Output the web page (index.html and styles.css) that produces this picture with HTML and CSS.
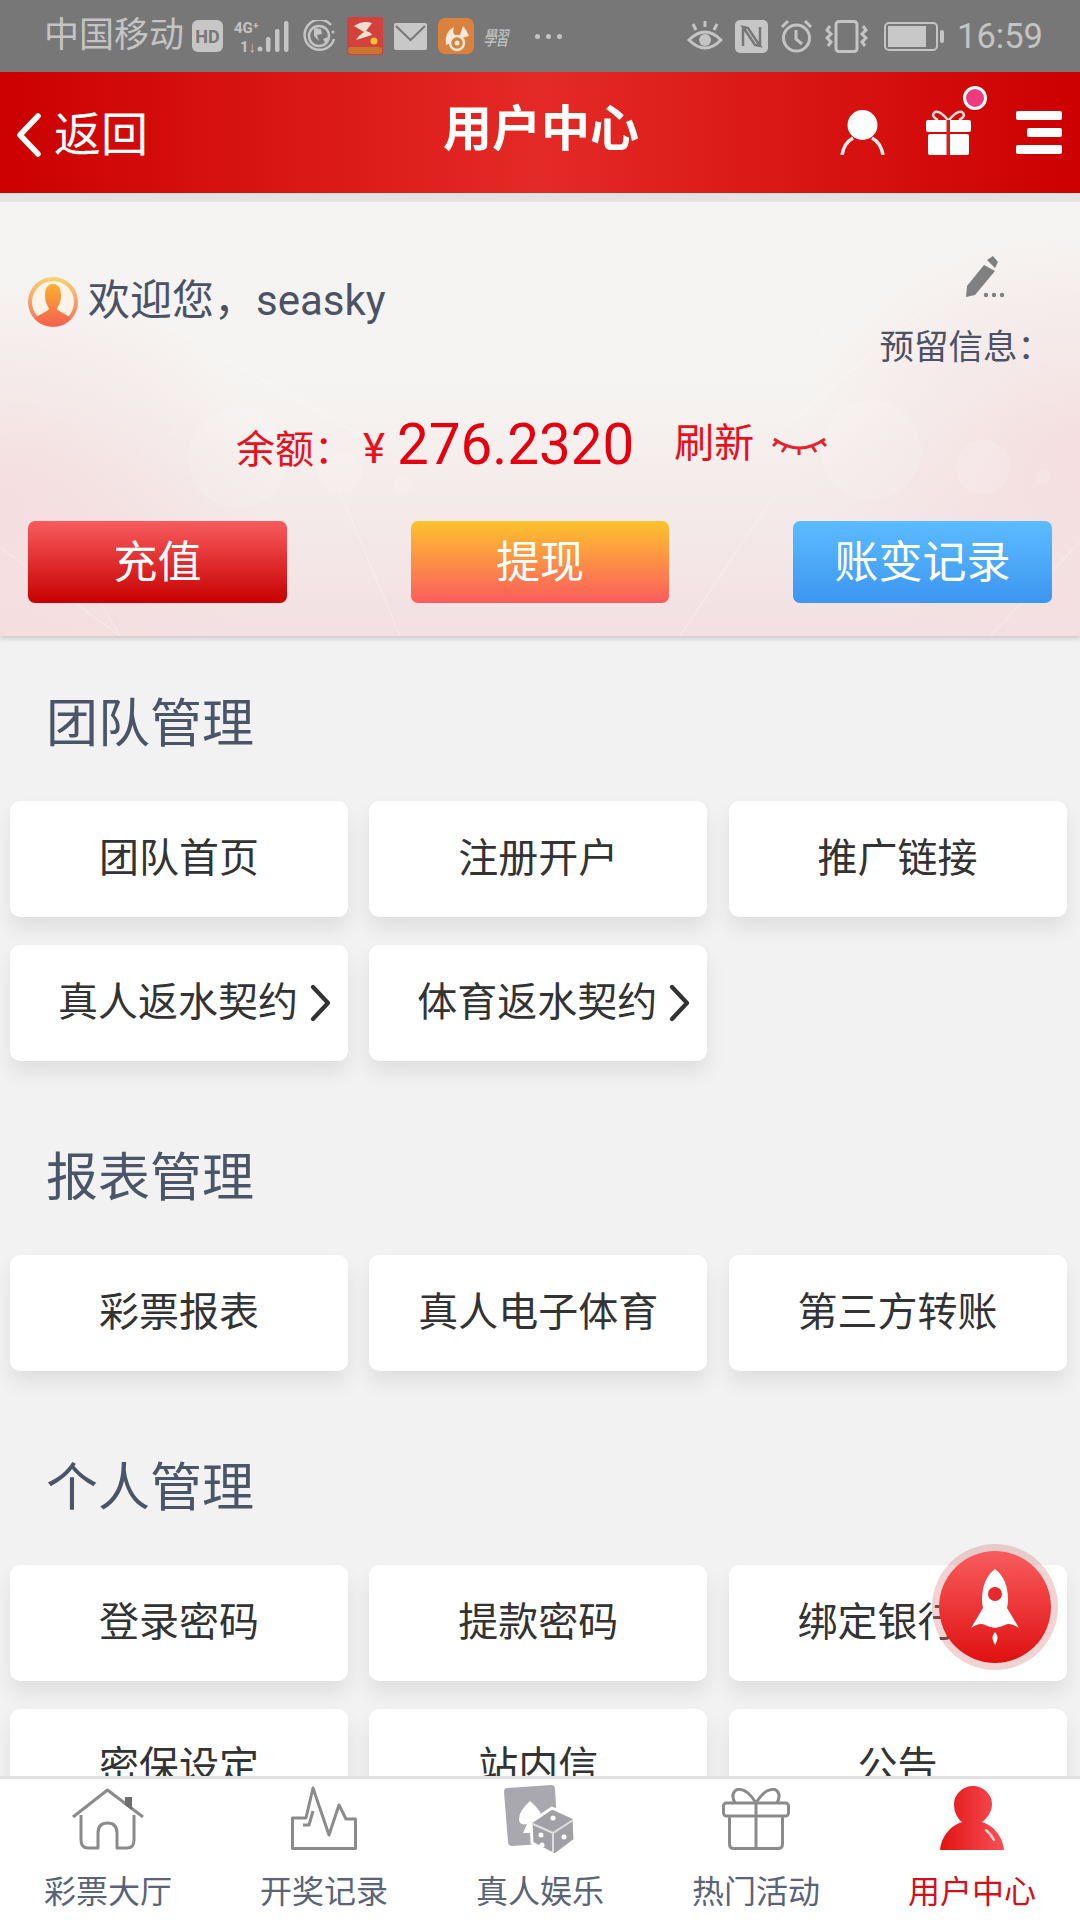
FILE: index.html
```html
<!DOCTYPE html>
<html lang="zh-CN">

<head>
    <meta charset="UTF-8">
    <meta name="viewport" content="width=device-width, initial-scale=1.0">
    <title>用户中心</title>
    <link rel="stylesheet" href="styles.css">
</head>

<body>
    <div class="page">
        <!-- Phone status bar -->
        <div class="status-bar">
            <div class="status-left">
                <span class="carrier">中国移动</span>
                <span class="hd">HD</span>
                <svg width="58" height="33" viewBox="0 0 58 33" fill="#c4c4c4">
                    <text x="0" y="13" class="svg-net">4G⁺</text>
                    <text x="6" y="32" class="svg-net">1↓</text>
                    <circle cx="26" cy="29" r="2.500"/><rect x="32" y="17" width="4.500" height="15" rx="2"/><rect x="41" y="9" width="4.500" height="23" rx="2"/><rect x="50" y="1" width="4.500" height="31" rx="2"/>
                </svg>
                <svg width="33" height="32" viewBox="0 0 33 32" fill="none" stroke="#c4c4c4" stroke-width="2.500">
                    <path d="M28 5A15 15 0 1 0 31 19"/><circle cx="16" cy="16" r="10"/>
                    <path d="M11 8l7 1 1 5-5 1 2 6-5-5zM20 19l5-2-2 7z" fill="#c4c4c4" stroke="none"/><circle cx="30" cy="12" r="1.500" fill="#c4c4c4" stroke="none"/>
                </svg>
                <svg width="36" height="38" viewBox="0 0 36 38">
                    <rect width="36" height="38" rx="3" fill="#d3413c"/>
                    <path d="M7 9q9-6 18-3l-6 8q5 1 6 4l-16 5q3-5 8-8z" fill="#f0e0d0"/>
                    <circle cx="27" cy="24" r="3.500" fill="#f2c230"/>
                    <rect x="1" y="30" width="34" height="7" rx="3" fill="#c9742f"/>
                </svg>
                <svg width="33" height="27" viewBox="0 0 33 27"><rect width="33" height="27" rx="2" fill="#c8c8c8"/><path d="M2 3l14.500 14L31 3" fill="none" stroke="#777" stroke-width="2"/></svg>
                <svg width="36" height="36" viewBox="0 0 36 36">
                    <rect width="36" height="36" rx="7" fill="#d9813d"/>
                    <path d="M8 27Q6 14 16 9q-2 6 1 8h5l3-9 3 4 3 6-7 2z" fill="#f6e9dc"/>
                    <circle cx="19" cy="25" r="7" fill="#d9813d" stroke="#f6e9dc" stroke-width="2.500"/>
                    <circle cx="19" cy="25" r="2.500" fill="#f6e9dc"/>
                </svg>
                <span class="script-mark">學習</span>
                <div class="dots"><i></i><i></i><i></i></div>
            </div>
            <div class="status-right">
                <svg width="36" height="33" viewBox="0 0 36 33" fill="none" stroke="#c4c4c4" stroke-width="3">
                    <path d="M2 20q16-16 32 0-16 16-32 0z"/><circle cx="18" cy="20" r="6" fill="#c4c4c4" stroke="none"/>
                    <path d="M18 1v6M6 4l3 6M30 4l-3 6"/>
                </svg>
                <svg width="33" height="33" viewBox="0 0 33 33"><rect width="33" height="33" rx="5" fill="#c6c6c6"/><path d="M8 7l5 1 12 18-5-1zM8 7v19M25 7v19" fill="none" stroke="#777" stroke-width="2.500"/></svg>
                <svg width="33" height="34" viewBox="0 0 33 34" fill="none" stroke="#c4c4c4" stroke-width="3">
                    <circle cx="16.500" cy="19" r="13"/><path d="M16 11v9l6 5M2 8l6-6M31 8l-6-6"/>
                </svg>
                <svg width="43" height="33" viewBox="0 0 43 33" fill="none" stroke="#c4c4c4" stroke-width="3">
                    <rect x="11" y="1.500" width="21" height="30" rx="3"/>
                    <path d="M5 6l-3 4 4 4-4 4 4 4-3 4M38 6l3 4-4 4 4 4-4 4 3 4"/>
                </svg>
                <svg class="battery" width="61" height="29" viewBox="0 0 61 29"><rect x="1" y="1" width="52" height="27" rx="4" fill="none" stroke="#c4c4c4" stroke-width="2"/><rect x="4" y="4" width="38" height="21" fill="#c8c8c8"/><rect x="56" y="8" width="4" height="13" rx="2" fill="#c4c4c4"/></svg>
                <span class="clock">16:59</span>
            </div>
        </div>

        <!-- Red title bar -->
        <header class="top-bar">
            <div class="back">
                <svg width="26" height="44" viewBox="0 0 26 44" fill="none" stroke="#fff" stroke-width="5.500" stroke-linecap="round" stroke-linejoin="round"><path d="M22 3L4 22l18 19"/></svg>
                <span>返回</span>
            </div>
            <h1 class="page-title">用户中心</h1>
            <div class="top-icons">
                <svg width="45" height="45" viewBox="0 0 45 45" fill="none" stroke="#fdeaea" stroke-width="3.500">
                    <circle cx="22.500" cy="15" r="15" fill="#fff" stroke="none"/>
                    <path d="M2 45q2-12 11-17M43 45q-2-12-11-17"/>
                </svg>
                <div class="gift-wrap">
                    <svg width="45" height="45" viewBox="0 0 45 45">
                        <path d="M22 10Q14 0 9 2q-5 4 3 8M23 10q8-10 13-8 5 4-3 8" fill="none" stroke="#fbdcdc" stroke-width="2.500"/>
                        <rect y="10" width="45" height="12" rx="2" fill="#fff"/>
                        <rect x="2" y="24" width="41" height="21" rx="2" fill="#fff"/>
                        <rect x="20.500" y="10" width="3.500" height="35" fill="#d9201c"/>
                    </svg>
                    <span class="badge"></span>
                </div>
                <svg width="46" height="43" viewBox="0 0 46 43" fill="#fff">
                    <rect width="46" height="9" rx="2"/><rect x="11" y="17" width="35" height="9" rx="2"/><rect y="34" width="46" height="9" rx="2"/>
                </svg>
            </div>
        </header>

        <!-- Account panel -->
        <section class="account">
            <svg class="account-bg" width="1080" height="434" viewBox="0 0 1080 434">
                <g fill="#fff" fill-opacity=".13">
                    <circle cx="238" cy="256" r="50"/><circle cx="340" cy="270" r="22"/><circle cx="403" cy="283" r="10"/>
                    <circle cx="871" cy="248" r="50"/><circle cx="983" cy="265" r="27"/><circle cx="1043" cy="275" r="8"/>
                    <circle cx="830" cy="130" r="12"/>
                </g>
                <g stroke="#fff" stroke-opacity=".22" stroke-width="1.500" fill="none">
                    <path d="M0 345l120 89M70 350l50 84M340 290l60 144M770 300l-90 134M1080 340l-90 94M160 120l230 130M920 110L780 230"/>
                </g>
            </svg>
            <div class="account-top">
                <div class="user">
                    <svg width="50" height="50" viewBox="0 0 50 50">
                        <defs>
                            <linearGradient id="ringGrad" x1="0" y1="0" x2="0" y2="1"><stop offset="0" stop-color="#f8d070"/><stop offset="1" stop-color="#f47060"/></linearGradient>
                            <linearGradient id="faceGrad" x1="0" y1="0" x2="0" y2="1"><stop offset="0" stop-color="#fbb030"/><stop offset="1" stop-color="#f46050"/></linearGradient>
                        </defs>
                        <circle cx="25" cy="25" r="23" fill="#fdf3e6" stroke="url(#ringGrad)" stroke-width="4"/>
                        <path d="M25 7c7 0 8 7 8 12 0 6-3 10-4 13 3 4 11 5 14 10q-7 7-18 7t-18-7c3-5 11-6 14-10-1-3-4-7-4-13 0-5 1-12 8-12z" fill="url(#faceGrad)"/>
                    </svg>
                    <span>欢迎您，seasky</span>
                </div>
                <div class="reserve">
                    <svg class="pencil" width="41" height="42" viewBox="0 0 41 42" fill="#808080">
                        <path d="M23 4l6-4 5 6-3 6zM20 9l11 6-20 24-9 2 1-11z"/>
                        <circle cx="22" cy="39" r="2.200"/><circle cx="30" cy="39" r="2.200"/><circle cx="38" cy="39" r="2.200"/>
                    </svg>
                    <span>预留信息：</span>
                </div>
            </div>
            <div class="balance">
                <span class="balance-label">余额：</span>
                <span class="yen">¥</span>
                <span class="amount">276.2320</span>
                <span class="refresh">刷新</span>
                <svg class="eye" width="55" height="20" viewBox="0 0 55 20" fill="none" stroke="#e8202a" stroke-width="3">
                    <path d="M2 2q25 18 51 0M14 9l-4 6M27 11v7M40 9l4 6M5 5l-4 4M50 5l4 4"/>
                </svg>
            </div>
            <div class="account-btns">
                <a class="btn btn-red">充值</a>
                <a class="btn btn-orange">提现</a>
                <a class="btn btn-blue">账变记录</a>
            </div>
        </section>

        <section class="group group-first">
            <h2>团队管理</h2>
            <div class="cards">
                <a class="card">团队首页</a>
                <a class="card">注册开户</a>
                <a class="card">推广链接</a>
                <a class="card card-more">真人返水契约<svg width="22" height="38" viewBox="0 0 22 38" fill="none" stroke="#333" stroke-width="4.200" stroke-linecap="round" stroke-linejoin="round"><path d="M3 3l15 16L3 35"/></svg></a>
                <a class="card card-more">体育返水契约<svg width="22" height="38" viewBox="0 0 22 38" fill="none" stroke="#333" stroke-width="4.200" stroke-linecap="round" stroke-linejoin="round"><path d="M3 3l15 16L3 35"/></svg></a>
            </div>
        </section>

        <section class="group">
            <h2>报表管理</h2>
            <div class="cards">
                <a class="card">彩票报表</a>
                <a class="card">真人电子体育</a>
                <a class="card">第三方转账</a>
            </div>
        </section>

        <section class="group">
            <h2>个人管理</h2>
            <div class="cards">
                <a class="card">登录密码</a>
                <a class="card">提款密码</a>
                <a class="card">绑定银行卡</a>
                <a class="card">密保设定</a>
                <a class="card">站内信</a>
                <a class="card">公告</a>
            </div>
        </section>

        <!-- Floating button -->
        <div class="fab">
            <svg width="50" height="76" viewBox="0 0 50 76" fill="#fff">
                <path d="M25 0q13 10 13 31 0 4-1 8l12 20q-9-6-14-3-4 2-10 3-6-1-10-3-5-3-14 3L13 39q-1-4-1-8Q12 10 25 0z"/>
                <circle cx="25" cy="25" r="7" fill="#e8282c"/>
                <path d="M25 63q5 5 0 13-5-8 0-13z"/>
            </svg>
        </div>

        <!-- Bottom tabs -->
        <nav class="tabs">
            <a class="tab">
                <svg width="74" height="62" viewBox="0 0 74 62" fill="none" stroke="#8b8b8b" stroke-width="3" stroke-linejoin="round">
                    <path d="M2 29L36.500 2 72 29"/>
                    <path d="M10 27V52q0 8 7 8H27V45q0-10 9.500-10T46 45V60H56q7 0 7-8V27"/>
                    <path d="M54 9h7v13l-7-5z" fill="#6e6e6e" stroke="none"/>
                </svg>
                <span>彩票大厅</span>
            </a>
            <a class="tab">
                <svg width="66" height="64" viewBox="0 0 66 64" fill="none" stroke="#8b8b8b" stroke-width="3" stroke-linejoin="round">
                    <path d="M1.500 32H15L22 2 38 49l10-30 7 14H64.500V62.500H1.500z"/>
                    <path d="M12 39h6l4-14"/>
                </svg>
                <span>开奖记录</span>
            </a>
            <a class="tab tab-dice">
                <svg width="72" height="70" viewBox="0 0 72 70">
                    <path d="M3 3l44-3q4 0 4 4l3 50q0 4-4 4L8 61q-4 0-4-4L0 7q0-4 3-4z" fill="#a8a8ae"/>
                    <path d="M26 16q12 10 12 18 0 7-8 5l3 9H19l4-9q-8 2-8-5 0-8 11-18z" fill="#fff"/>
                    <path d="M48 23l22 10 1 22-20 15-23-12-1-21z" fill="#a0a0a6" stroke="#fff" stroke-width="3" stroke-linejoin="round"/>
                    <path d="M29 39l20 9 20-13M49 48v19" fill="none" stroke="#dedee0" stroke-width="2"/>
                    <g fill="#fff"><circle cx="37" cy="50" r="2.500"/><circle cx="38" cy="60" r="2.500"/><circle cx="60" cy="52" r="2.500"/><circle cx="49" cy="33" r="2.500"/></g>
                </svg>
                <span>真人娱乐</span>
            </a>
            <a class="tab">
                <svg width="68" height="62" viewBox="0 0 68 62" fill="none" stroke="#8b8b8b" stroke-width="3" stroke-linejoin="round">
                    <path d="M34 15Q25 0 15 1.500q-7 4-2 13.500M34 15Q43 0 53 1.500q7 4 2 13.500"/>
                    <rect x="1.500" y="15" width="65" height="13" rx="3"/>
                    <path d="M7.500 28V56q0 4.500 4.500 4.500H56q4.500 0 4.500-4.500V28M34 15V60"/>
                </svg>
                <span>热门活动</span>
            </a>
            <a class="tab tab-active">
                <svg width="64" height="64" viewBox="0 0 64 64">
                    <defs><linearGradient id="personGrad"><stop offset="0" stop-color="#e21414"/><stop offset="1" stop-color="#f85055"/></linearGradient></defs>
                    <path d="M33 0c10 0 19 8 19 18 0 9-6 15-10 18 12 4 20 14 22 27q0 1-1 1H1q-1 0-1-1C2 50 10 40 22 36 18 33 14 27 14 18 14 8 23 0 33 0z" fill="url(#personGrad)"/>
                    <path d="M46 44q5 4 8 10" fill="none" stroke="#fbd0d0" stroke-width="2.500" stroke-linecap="round"/>
                </svg>
                <span>用户中心</span>
            </a>
        </nav>
    </div>
</body>

</html>
```

FILE: styles.css
```css
* {
    box-sizing: border-box;
}

html,
body {
    margin: 0;
    padding: 0;
}

body {
    font-family: Roboto, "Noto Sans CJK SC", sans-serif;
    background-color: #f2f2f2;
}

.page {
    position: relative;
    width: 1080px;
    height: 1920px;
    overflow: hidden;
    background-color: #f2f2f2;
}

svg {
    display: block;
    flex-shrink: 0;
}

/* Status bar */
.status-bar {
    height: 72px;
    padding: 0 37px 0 44px;
    display: flex;
    align-items: center;
    justify-content: space-between;
    background-color: #777;
    color: #c4c4c4;
}

.status-left,
.status-right {
    display: flex;
    align-items: center;
    gap: 11px;
}

.status-right {
    gap: 12px;
}

.carrier {
    font-size: 35px;
    line-height: 40px;
    margin-right: -3px;
}

.hd {
    width: 31px;
    height: 32px;
    display: flex;
    align-items: center;
    justify-content: center;
    border-radius: 6px;
    background-color: #c6c6c6;
    font-size: 18px;
    font-weight: 700;
    color: #777;
}

.clock {
    font-size: 34.500px;
    line-height: 40px;
}

.battery {
    margin-left: 4px;
}

.svg-net {
    font: 700 15px Roboto, sans-serif;
}

.script-mark {
    width: 27px;
    font-size: 13px;
    letter-spacing: -1px;
    white-space: nowrap;
    color: #c8c8c8;
    transform: skewX(-10deg) scaleY(1.500);
}

.dots {
    display: flex;
    gap: 6px;
    margin-left: 12px;
}

.dots i {
    width: 5px;
    height: 5px;
    border-radius: 50%;
    background-color: #c4c4c4;
}

/* Title bar */
.top-bar {
    height: 121px;
    padding: 0 18px 0 16px;
    display: grid;
    grid-template-columns: 1fr auto 1fr;
    align-items: center;
    background: linear-gradient(90deg, #cc0000 0%, #e42a26 50%, #cc0000 100%);
    color: #fff;
}

.back {
    display: flex;
    align-items: center;
    gap: 12px;
    font-size: 47px;
    line-height: 60px;
    margin-top: 5px;
}

.page-title {
    margin: -5px 0 0 4px;
    font-size: 49px;
    font-weight: 700;
    line-height: 60px;
}

.top-icons {
    display: flex;
    align-items: center;
    justify-content: flex-end;
    gap: 41px;
}

.gift-wrap {
    position: relative;
    margin-right: 4px;
}

.badge {
    position: absolute;
    top: -24px;
    right: -16px;
    width: 24px;
    height: 24px;
    border: 3px solid #fff;
    border-radius: 50%;
    background-color: #f03a80;
}

/* Account panel */
.account {
    position: relative;
    height: 434px;
    margin-top: 9px;
    padding: 54px 28px 0;
    background:
        radial-gradient(ellipse 280px 220px at 0 300px, rgba(245, 215, 218, .7), rgba(245, 215, 218, 0)),
        radial-gradient(ellipse 280px 220px at 1080px 250px, rgba(245, 215, 218, .7), rgba(245, 215, 218, 0)),
        linear-gradient(180deg, #f5f4f2 0%, #f5f3f1 45%, #f3e0e2 100%);
    box-shadow: 0 -9px 0 #e4e2e2, 0 3px 4px rgba(0, 0, 0, .15);
}

.account-bg {
    position: absolute;
    top: 0;
    left: 0;
}

.account-top,
.balance,
.account-btns {
    position: relative;
}

.account-top {
    height: 114px;
    display: flex;
    justify-content: space-between;
}

.user {
    display: flex;
    align-items: center;
    gap: 10px;
    height: 50px;
    margin-top: 21px;
    font-size: 42px;
    color: #4a5264;
}

.user span {
    margin-top: -12px;
}

.reserve {
    display: flex;
    flex-direction: column;
    align-items: flex-end;
    font-size: 34.500px;
    line-height: 46px;
    color: #4a5264;
}

.pencil {
    margin: 0 47px 26px 0;
}

.balance {
    height: 70px;
    margin-top: 40px;
    padding-left: 208px;
    display: flex;
    align-items: center;
    color: #e8101c;
}

.balance-label {
    width: 127px;
    font-size: 39px;
    line-height: 46px;
    margin-top: 10px;
}

.yen {
    width: 34px;
    font-size: 42px;
    line-height: 46px;
    margin-top: 8px;
}

.amount {
    font-size: 56.500px;
    line-height: 70px;
    color: #e4000f;
}

.refresh {
    margin: -2px 0 0 40px;
    font-size: 40px;
    line-height: 46px;
}

.eye {
    margin: 4px 0 0 18px;
}

.account-btns {
    margin-top: 41px;
    display: flex;
    justify-content: space-between;
}

.btn {
    width: 259px;
    height: 82px;
    padding-bottom: 6px;
    display: flex;
    align-items: center;
    justify-content: center;
    border-radius: 7px;
    font-size: 44px;
    color: #fff;
}

.btn-red {
    background: linear-gradient(180deg, #f85c5e, #c80000);
}

.btn-orange {
    width: 258px;
    background: linear-gradient(180deg, #fdc22d, #fb5c5e);
}

.btn-blue {
    background: linear-gradient(180deg, #5bbcff, #3d96f0);
}

/* Menu groups */
.group {
    padding: 0 13px 0 10px;
    margin-top: 82px;
}

.group-first {
    margin-top: 53px;
}

.group h2 {
    margin: 0 0 40px 36px;
    font-size: 52px;
    font-weight: 400;
    line-height: 72px;
    color: #4a5568;
}

.cards {
    display: grid;
    grid-template-columns: repeat(3, 338px);
    column-gap: 21.250px;
    row-gap: 28px;
}

.card {
    height: 116px;
    padding-bottom: 8px;
    display: flex;
    align-items: center;
    justify-content: center;
    background-color: #fff;
    border-radius: 10px;
    box-shadow: 0 12px 20px rgba(0, 0, 0, .08);
    font-size: 40px;
    color: #333;
}

.card-more {
    justify-content: flex-start;
    padding-left: 48px;
    gap: 12px;
}

.card-more svg {
    margin-top: 8px;
}

/* Floating rocket */
.fab {
    position: absolute;
    left: 939px;
    top: 1551px;
    width: 112px;
    height: 112px;
    display: flex;
    align-items: center;
    justify-content: center;
    border-radius: 50%;
    background: linear-gradient(180deg, #f85c5e, #e01010);
    box-shadow: 0 0 0 7px rgba(215, 130, 130, .35);
}

/* Bottom tabs */
.tabs {
    position: absolute;
    left: 0;
    right: 0;
    bottom: 0;
    height: 144px;
    display: grid;
    grid-template-columns: repeat(5, 1fr);
    background-color: #fff;
    border-top: 3px solid #e2e2e2;
}

.tab {
    height: 141px;
    padding-bottom: 8px;
    display: flex;
    flex-direction: column;
    align-items: center;
    justify-content: flex-end;
    gap: 22px;
    font-size: 32px;
    line-height: 40px;
    color: #5a6478;
}

.tab-dice svg {
    margin-bottom: -5px;
}

.tab-active {
    color: #d3101c;
}
```
